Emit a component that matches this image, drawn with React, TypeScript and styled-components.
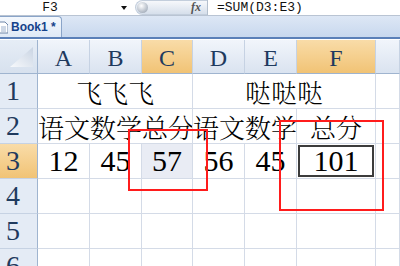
import React from 'react';
import styled, { createGlobalStyle, css } from 'styled-components';

const GlobalStyle = createGlobalStyle`
  html, body {
    margin: 0;
    padding: 0;
    background: #fff;
  }
  body {
    width: 400px;
    height: 266px;
    overflow: hidden;
  }
`;

const SERIF = `"Liberation Serif", "Noto Serif CJK SC", "Noto Sans CJK SC", serif`;
const MONO = `"Liberation Mono", "DejaVu Sans Mono", monospace`;

const Window = styled.div`
  display: flex;
  flex-direction: column;
  width: 400px;
  height: 266px;
  overflow: hidden;
`;

const FormulaBar = styled.div`
  display: flex;
  align-items: center;
  height: 17px;
  background: #fff;
  border-bottom: 1px solid #b9c4d3;
`;

const NameBox = styled.div`
  display: flex;
  align-items: center;
  width: 133px;
  height: 100%;
`;

const NameText = styled.span`
  width: 100px;
  text-align: center;
  font-family: ${MONO};
  font-size: 13px;
  color: #111;
`;

const DropArrow = styled.span`
  margin-left: auto;
  margin-right: 6px;
  width: 0;
  height: 0;
  border-left: 3px solid transparent;
  border-right: 3px solid transparent;
  border-top: 4px solid #111;
`;

const FxButton = styled.div`
  display: flex;
  align-items: center;
  justify-content: space-between;
  width: 72px;
  height: 15px;
  margin-left: 2px;
  padding: 0 6px 0 1px;
  box-sizing: border-box;
  border-radius: 8px 0 0 8px;
  background: linear-gradient(#f6f8fb, #d6dfeb);
  border: 1px solid #c3cedc;
  border-right: none;
`;

const Knob = styled.span`
  width: 11px;
  height: 11px;
  border-radius: 50%;
  background: radial-gradient(circle at 40% 35%, #ffffff, #aeb7c3 70%, #8e98a6);
`;

const FxText = styled.span`
  font-family: ${SERIF};
  font-style: italic;
  font-weight: bold;
  font-size: 12px;
  color: #555;
`;

const Separator = styled.span`
  width: 1px;
  height: 100%;
  background: #b3bfcd;
`;

const FormulaInput = styled.div`
  flex: 1;
  padding-left: 9px;
  font-family: ${MONO};
  font-size: 13px;
  color: #111;
`;

const TabStrip = styled.div`
  display: flex;
  align-items: flex-end;
  height: 24px;
  background: linear-gradient(#dde7f5, #c8d8ee);
  border-bottom: 2px solid #5b80b8;
`;

const Tab = styled.div`
  display: flex;
  align-items: center;
  gap: 3px;
  width: 62px;
  height: 21px;
  box-sizing: border-box;
  background: linear-gradient(#f4f8fd, #dfe9f6);
  border: 1px solid #8aa4c8;
  border-left: none;
  border-bottom: none;
  border-radius: 0 4px 0 0;
  font-family: "Liberation Sans", Arial, sans-serif;
  font-weight: bold;
  font-size: 12px;
  color: #15428b;
`;

const Sheet = styled.div`
  position: relative;
  display: grid;
  grid-template-columns: 38px 52px 52px 51px 52px 52px 79px 1fr;
  grid-template-rows: 34px repeat(6, 35px);
  margin-top: 1px;
`;

const Corner = styled.div`
  background: linear-gradient(#e6edf6, #d7e1ee);
  border-right: 1px solid #9fb4cf;
  border-bottom: 1px solid #9fb4cf;
  box-sizing: border-box;
`;

const orange = css`
  background: linear-gradient(#f9dca8, #f1c375);
`;

const ColHeader = styled.div<{ $active?: boolean }>`
  display: flex;
  align-items: center;
  justify-content: center;
  padding-top: 3px;
  box-sizing: border-box;
  background: linear-gradient(#f1f5fb, #dae3f0);
  border-right: 1px solid #c6d2e3;
  border-bottom: 1px solid #9fb4cf;
  font-family: ${SERIF};
  font-size: 24px;
  color: #1f3a5e;
  ${(p) => p.$active && orange}
`;

const RowHeader = styled.div<{ $active?: boolean }>`
  display: flex;
  align-items: center;
  padding-left: 6px;
  box-sizing: border-box;
  background: #e4ebf5;
  border-right: 1px solid #9fb4cf;
  border-bottom: 1px solid #c6d2e3;
  font-family: ${SERIF};
  font-size: 28px;
  color: #1f3a5e;
  ${(p) => p.$active && orange}
`;

const Cell = styled.div<{ $span?: number; $align?: 'left' | 'center'; $shade?: boolean; $cjk?: boolean }>`
  display: flex;
  align-items: center;
  justify-content: ${(p) => (p.$align === 'left' ? 'flex-start' : 'center')};
  grid-column: span ${(p) => p.$span ?? 1};
  box-sizing: border-box;
  border-right: 1px solid #d4dbe7;
  border-bottom: 1px solid #d4dbe7;
  background: ${(p) => (p.$shade ? '#e9ecf4' : '#fff')};
  white-space: nowrap;
  overflow: hidden;
  font-family: ${SERIF};
  font-size: ${(p) => (p.$cjk ? '26px' : '30px')};
  font-weight: ${(p) => (p.$cjk ? 300 : 400)};
  color: #000;
`;

const ActiveBox = styled.div`
  display: flex;
  align-items: center;
  justify-content: center;
  width: 76px;
  height: 32px;
  box-sizing: border-box;
  border: 2px solid #3c3c3c;
`;

const RedBox = styled.div<{ $x: number; $y: number; $w: number; $h: number }>`
  position: absolute;
  left: ${(p) => p.$x}px;
  top: ${(p) => p.$y}px;
  width: ${(p) => p.$w}px;
  height: ${(p) => p.$h}px;
  box-sizing: border-box;
  border: 2px solid #ff1c1c;
  pointer-events: none;
`;

const CornerTriangle = () => (
  <svg width="38" height="33" viewBox="0 0 38 33" style={{ display: 'block' }}>
    <defs>
      <linearGradient id="tri" x1="0" y1="1" x2="1" y2="0">
        <stop offset="0" stopColor="#f7f9fc" />
        <stop offset="1" stopColor="#c9d4e3" />
      </linearGradient>
    </defs>
    <polygon points="33,7 33,27 10,27" fill="url(#tri)" />
  </svg>
);

const FileIcon = () => (
  <svg width="8" height="13" viewBox="0 0 8 13">
    <path d="M0 1 H5 L8 4 V12 H0" fill="#fff" stroke="#6f86a8" strokeWidth="1" />
    <path d="M1 6 H6 M1 8 H6 M1 10 H6" stroke="#9cb0cc" strokeWidth="1" />
  </svg>
);

const columns = ['A', 'B', 'C', 'D', 'E', 'F'];
const activeCols = ['C', 'F'];

const emptyRow = () => (
  <>
    <Cell />
    <Cell />
    <Cell />
    <Cell />
    <Cell />
    <Cell />
    <Cell />
  </>
);

const App = () => {
  return (
    <Window>
      <GlobalStyle />
      <FormulaBar>
        <NameBox>
          <NameText>F3</NameText>
          <DropArrow />
        </NameBox>
        <FxButton>
          <Knob />
          <FxText>fx</FxText>
        </FxButton>
        <Separator />
        <FormulaInput>=SUM(D3:E3)</FormulaInput>
      </FormulaBar>

      <TabStrip>
        <Tab>
          <FileIcon />
          Book1 *
        </Tab>
      </TabStrip>

      <Sheet>
        <Corner>
          <CornerTriangle />
        </Corner>
        {columns.map((c) => (
          <ColHeader key={c} $active={activeCols.includes(c)}>
            {c}
          </ColHeader>
        ))}
        <ColHeader />

        <RowHeader>1</RowHeader>
        <Cell $span={3} $cjk>飞飞飞</Cell>
        <Cell $span={3} $cjk>哒哒哒</Cell>
        <Cell />

        <RowHeader>2</RowHeader>
        <Cell $span={3} $cjk $align="left">语文数学总分</Cell>
        <Cell $span={2} $cjk $align="left">语文数学</Cell>
        <Cell $cjk>总分</Cell>
        <Cell />

        <RowHeader $active>3</RowHeader>
        <Cell>12</Cell>
        <Cell>45</Cell>
        <Cell $shade>57</Cell>
        <Cell>56</Cell>
        <Cell>45</Cell>
        <Cell>
          <ActiveBox>101</ActiveBox>
        </Cell>
        <Cell />

        <RowHeader>4</RowHeader>
        {emptyRow()}
        <RowHeader>5</RowHeader>
        {emptyRow()}
        <RowHeader>6</RowHeader>
        {emptyRow()}

        <RedBox $x={128} $y={89} $w={80} $h={62} />
        <RedBox $x={279} $y={80} $w={105} $h={91} />
      </Sheet>
    </Window>
  );
};

export default App;
